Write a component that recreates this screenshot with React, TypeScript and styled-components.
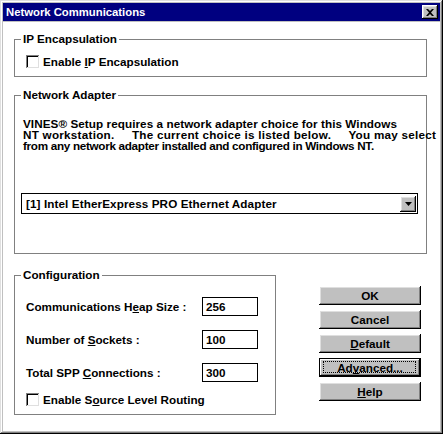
import React from 'react';
import styled, { createGlobalStyle } from 'styled-components';

const Global = createGlobalStyle`
  html, body { margin: 0; padding: 0; background: #fff; }
  body { font-family: "Liberation Sans", Arial, sans-serif; font-size: 11.7px; font-weight: bold; color: #000; }
  * { box-sizing: border-box; }
`;

const Window = styled.div`
  width: 443px;
  height: 434px;
  background: #c0c0c0;
  padding: 3px;
  box-shadow: inset -1px -1px #000, inset 1px 1px #dfdfdf, inset -2px -2px #808080, inset 2px 2px #fff;
  display: flex;
  flex-direction: column;
`;

const TitleBar = styled.div`
  height: 18px;
  background: #000080;
  color: #fff;
  display: flex;
  align-items: center;
  justify-content: space-between;
  padding: 0 2px 0 3px;
  font-size: 11.3px;
`;

const CloseBtn = styled.div`
  width: 16px;
  height: 14px;
  background: #c0c0c0;
  box-shadow: inset -1px -1px #000, inset 1px 1px #fff, inset -2px -2px #808080, inset 2px 2px #dfdfdf;
  display: flex;
  align-items: center;
  justify-content: center;
`;

const Client = styled.div`
  flex: 1;
  margin-top: 1px;
  background: #fff;
  padding: 10px 13px 0 11px;
  display: flex;
  flex-direction: column;
`;

const Group = styled.fieldset<{ $mt?: number; $pb?: number; $w?: number }>`
  margin: ${p => p.$mt ?? 0}px 0 0 0;
  padding: 0 0 ${p => p.$pb ?? 0}px 0;
  border: 1px solid #808080;
  min-width: 0;
  ${p => (p.$w ? `width: ${p.$w}px;` : '')}
`;

const Legend = styled.legend`
  margin-left: 6px;
  padding: 0 2px;
  line-height: 14px;
`;

const CheckRow = styled.label<{ $mt?: number }>`
  display: flex;
  align-items: center;
  height: 14px;
  margin: ${p => p.$mt ?? 0}px 0 0 11px;
  gap: 4px;
`;

const Box = styled.span`
  width: 13px;
  height: 13px;
  background: #fff;
  box-shadow: inset 1px 1px #808080, inset -1px -1px #dfdfdf, inset 2px 2px #000;
`;

const Para = styled.p`
  margin: 16px 0 0 8px;
  line-height: 11px;
  white-space: pre;
  overflow: visible;
`;

const ParaLine = styled.span<{ $ls: number }>`
  display: block;
  letter-spacing: ${p => p.$ls}px;
`;

const Dropdown = styled.div`
  margin: 42px 8px 0 6px;
  height: 21px;
  border: 1px solid #000;
  display: flex;
  align-items: center;
  justify-content: space-between;
  padding: 0 1px 0 4px;
`;

const DropText = styled.span`
  letter-spacing: 0.1px;
`;

const DropBtn = styled.div`
  width: 16px;
  height: 16px;
  background: #c0c0c0;
  box-shadow: inset -1px -1px #000, inset 1px 1px #fff, inset -2px -2px #808080, inset 2px 2px #dfdfdf;
  display: flex;
  align-items: center;
  justify-content: center;
`;

const BottomRow = styled.div`
  display: flex;
  align-items: flex-start;
  margin-top: 14px;
  gap: 43px;
`;

const ConfigRows = styled.div`
  display: flex;
  flex-direction: column;
  gap: 14px;
  margin: 15px 0 0 11px;
`;

const FieldRow = styled.div`
  display: flex;
  align-items: center;
  height: 19px;
`;

const FieldLabel = styled.span`
  width: 176px;
`;

const Input = styled.div`
  width: 56px;
  height: 19px;
  border: 1px solid #000;
  padding: 0 3px;
  display: flex;
  align-items: center;
`;

const Buttons = styled.div`
  display: flex;
  flex-direction: column;
  gap: 5px;
  margin-top: 18px;
`;

const Button = styled.div<{ $focus?: boolean }>`
  width: 102px;
  height: 19px;
  background: #c0c0c0;
  display: flex;
  align-items: center;
  justify-content: center;
  position: relative;
  box-shadow: ${p =>
    p.$focus
      ? 'inset 0 0 0 1px #000, inset -2px -2px #000, inset 2px 2px #fff, inset -3px -3px #808080'
      : 'inset -1px -1px #000, inset 1px 1px #fff, inset -2px -2px #808080, inset 2px 2px #dfdfdf'};
`;

const FocusRect = styled.span`
  position: absolute;
  inset: 3px 5px 4px 4px;
  border: 1px dotted #000;
`;

const paragraph: { text: string; ls: number }[] = [
  { text: 'VINES® Setup requires a network adapter choice for this Windows', ls: 0.07 },
  { text: 'NT workstation.     The current choice is listed below.     You may select', ls: 0.25 },
  { text: 'from any network adapter installed and configured in Windows NT.', ls: -0.3 },
];

export default function App() {
  return (
    <>
      <Global />
      <Window>
        <TitleBar>
          <span>Network Communications</span>
          <CloseBtn>
            <svg width="8" height="7" viewBox="0 0 8 7">
              <path d="M0 0h2l2 2 2-2h2L5 3.5 8 7H6L4 5 2 7H0l3-3.5z" fill="#000" />
            </svg>
          </CloseBtn>
        </TitleBar>
        <Client>
          <Group $pb={8}>
            <Legend>IP Encapsulation</Legend>
            <CheckRow $mt={8}>
              <Box />
              <span>Enable <u>I</u>P Encapsulation</span>
            </CheckRow>
          </Group>
          <Group $mt={11} $pb={39}>
            <Legend>Network Adapter</Legend>
            <Para>
              {paragraph.map(l => (
                <ParaLine key={l.text} $ls={l.ls}>{l.text}</ParaLine>
              ))}
            </Para>
            <Dropdown>
              <DropText>[1] Intel EtherExpress PRO Ethernet Adapter</DropText>
              <DropBtn>
                <svg width="7" height="4" viewBox="0 0 7 4">
                  <path d="M0 0h7L3.5 4z" fill="#000" />
                </svg>
              </DropBtn>
            </Dropdown>
          </Group>
          <BottomRow>
            <Group $pb={8} $w={262}>
              <Legend>Configuration</Legend>
              <ConfigRows>
                <FieldRow>
                  <FieldLabel>Communications H<u>e</u>ap Size :</FieldLabel>
                  <Input>256</Input>
                </FieldRow>
                <FieldRow>
                  <FieldLabel>Number of <u>S</u>ockets :</FieldLabel>
                  <Input>100</Input>
                </FieldRow>
                <FieldRow>
                  <FieldLabel>Total SPP <u>C</u>onnections :</FieldLabel>
                  <Input>300</Input>
                </FieldRow>
              </ConfigRows>
              <CheckRow $mt={10}>
                <Box />
                <span>Enable S<u>o</u>urce Level Routing</span>
              </CheckRow>
            </Group>
            <Buttons>
              <Button>OK</Button>
              <Button>Cancel</Button>
              <Button><span><u>D</u>efault</span></Button>
              <Button $focus><FocusRect /><span>Ad<u>v</u>anced...</span></Button>
              <Button><span><u>H</u>elp</span></Button>
            </Buttons>
          </BottomRow>
        </Client>
      </Window>
    </>
  );
}
